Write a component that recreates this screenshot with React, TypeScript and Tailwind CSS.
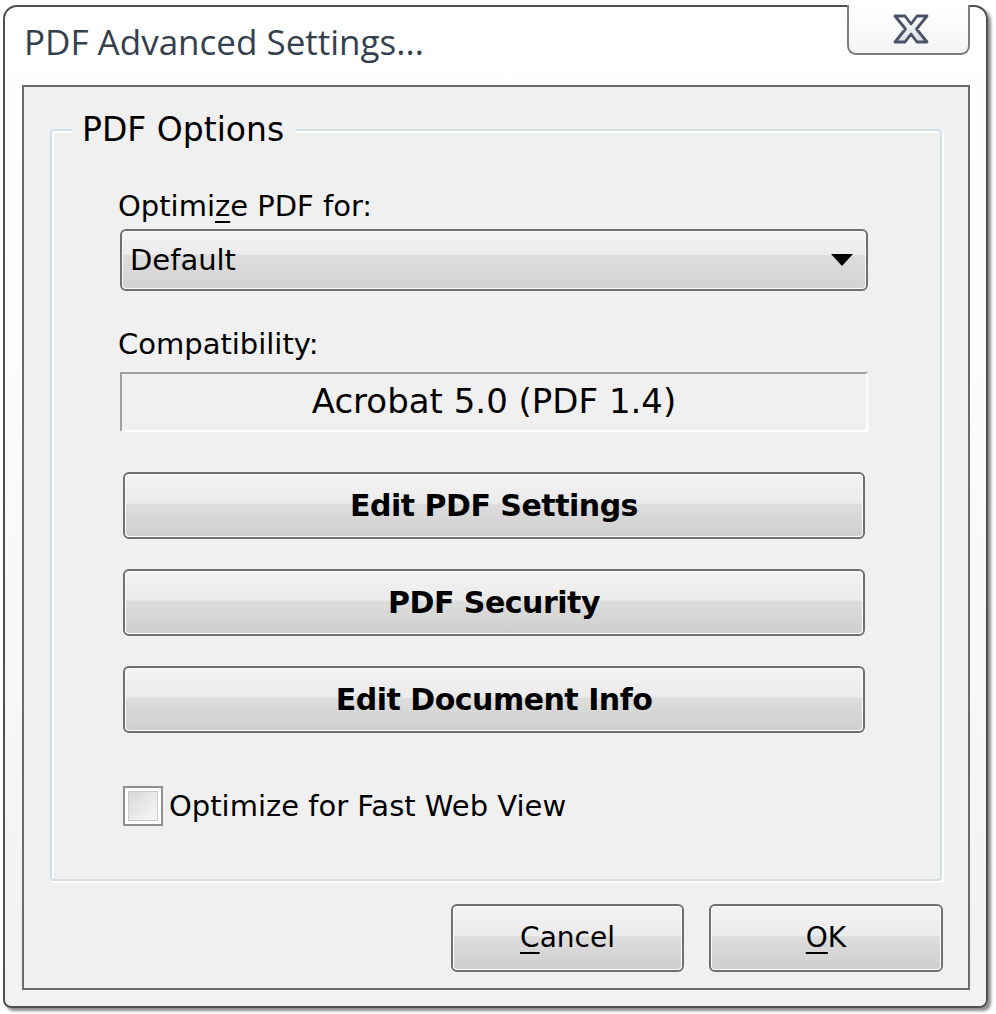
import React from "react";

function WinButton({ children, className = "" }: { children: React.ReactNode; className?: string }) {
  return (
    <div className={`rounded-[6px] border-2 border-[#707070] ${className}`}>
      <div className="flex h-full w-full items-center justify-center rounded-[4px] border border-[#fbfbfb] bg-[linear-gradient(180deg,#f3f3f3_0%,#ebebeb_46%,#dddddd_48%,#cfcfcf_100%)]">
        {children}
      </div>
    </div>
  );
}

export default function App() {
  return (
    <div className="relative h-[1014px] w-[996px] overflow-hidden bg-white">
      {/* window */}
      <div className="ml-[3px] mt-[5px] flex h-[1003px] w-[985px] flex-col rounded-t-[14px] rounded-b-[8px] border-2 border-[#4f4f4f] bg-[linear-gradient(180deg,#ffffff_0%,#fbfbfb_40%,#f1f2f3_100%)] shadow-[3px_3px_3px_rgba(0,0,0,0.45)]">
        {/* title bar */}
        <div className="flex h-[78px] shrink-0 items-start justify-between">
          <div className="pl-[19px] pt-[11px] font-['Open_Sans',sans-serif] text-[35px] leading-[47px] text-[#34404e]">
            PDF Advanced Settings...
          </div>
          <div className="mr-[16px] mt-[-2px] flex h-[50px] w-[123px] items-center justify-center rounded-b-[9px] border-2 border-t-0 border-[#7d7d7d] bg-[linear-gradient(180deg,#ffffff_0%,#f4f4f4_100%)]">
            <svg width="38" height="32" viewBox="0 0 38 32" className="ml-[4px]">
              <defs>
                <linearGradient id="xg" x1="0" y1="0" x2="0" y2="1">
                  <stop offset="0" stopColor="#ffffff" />
                  <stop offset="1" stopColor="#d9dde3" />
                </linearGradient>
              </defs>
              <polygon
                points="3,3 13,3 19,11 25,3 35,3 24.5,16 35,29 25,29 19,21 13,29 3,29 13.5,16"
                fill="url(#xg)"
                stroke="#4a5466"
                strokeWidth="2.8"
                strokeLinejoin="round"
              />
            </svg>
          </div>
        </div>

        {/* client area */}
        <div className="ml-[17px] mr-[16px] flex h-[905px] flex-col border-2 border-[#6b6b6b] bg-[#f0f0f0] font-['DejaVu_Sans',sans-serif] text-black">
          {/* group box */}
          <div className="relative mx-[26px] mt-[42px] h-[752px] rounded-[4px] border-2 border-[#d5dfe5] shadow-[inset_2px_2px_0_#ffffff,2px_2px_0_#ffffff]">
            <span className="absolute left-[19px] top-[-20px] bg-[#f0f0f0] px-[11px] text-[33px] leading-[38px]">
              PDF Options
            </span>
            <div className="flex flex-col pl-[66px] pr-[72px] pt-[58px]">
              <div className="text-[29px] leading-[34px]">
                Optimi<span className="underline decoration-[2px] underline-offset-[5px]">z</span>e PDF for:
              </div>
              <div className="ml-[2px] mt-[6px] h-[62px] rounded-[6px] border-2 border-[#707070]">
                <div className="flex h-full items-center justify-between rounded-[4px] border border-[#fbfbfb] bg-[linear-gradient(180deg,#f3f3f3_0%,#ececec_40%,#dedede_42%,#d2d2d2_100%)] pl-[7px] pr-[11px]">
                  <span className="text-[29px] leading-[34px]">Default</span>
                  <svg width="24" height="14" viewBox="0 0 24 14">
                    <polygon points="1,1 23,1 12,13" fill="#000" />
                  </svg>
                </div>
              </div>
              <div className="mt-[36px] text-[29px] leading-[34px]">Compatibility:</div>
              <div className="ml-[2px] mt-[11px] flex h-[60px] items-center justify-center border-2 border-b-white border-l-[#a0a0a0] border-r-white border-t-[#a0a0a0] pb-[2px] text-[34px] leading-[40px]">
                Acrobat 5.0 (PDF 1.4)
              </div>
              <div className="ml-[5px] mr-[3px] mt-[40px] flex flex-col gap-[30px]">
                <WinButton className="h-[67px]">
                  <span className="text-[30px] font-bold leading-[36px] tracking-[-0.5px]">Edit PDF Settings</span>
                </WinButton>
                <WinButton className="h-[67px]">
                  <span className="text-[30px] font-bold leading-[36px] tracking-[-0.5px]">PDF Security</span>
                </WinButton>
                <WinButton className="h-[67px]">
                  <span className="text-[30px] font-bold leading-[36px] tracking-[-0.5px]">Edit Document Info</span>
                </WinButton>
              </div>
              <div className="ml-[5px] mt-[53px] flex items-center gap-[6px]">
                <div className="flex h-[40px] w-[40px] items-center justify-center border-2 border-[#8e8f8f] bg-white">
                  <div className="h-[30px] w-[30px] border border-[#c9cacb] bg-[linear-gradient(135deg,#d6d7d8_0%,#e9eaea_55%,#f8f8f8_100%)]" />
                </div>
                <span className="text-[29px] leading-[34px]">Optimize for Fast Web View</span>
              </div>
            </div>
          </div>

          {/* bottom buttons */}
          <div className="mr-[25px] mt-[23px] flex justify-end gap-[25px]">
            <WinButton className="h-[68px] w-[233px]">
              <span className="text-[28px] leading-[34px]">
                <span className="underline decoration-[2px] underline-offset-[5px]">C</span>ancel
              </span>
            </WinButton>
            <WinButton className="h-[68px] w-[234px]">
              <span className="text-[28px] leading-[34px]">
                <span className="underline decoration-[2px] underline-offset-[5px]">O</span>K
              </span>
            </WinButton>
          </div>
        </div>
      </div>
    </div>
  );
}
